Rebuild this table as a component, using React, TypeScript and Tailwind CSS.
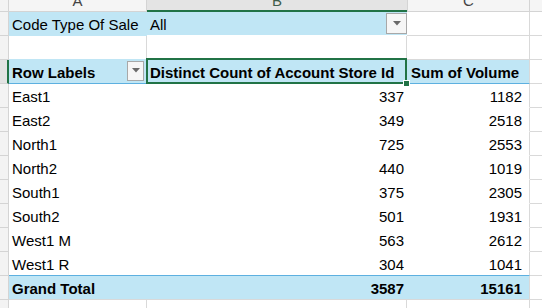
// Pivot table sheet view — Excel-like grid with a page filter, header row and grand total.
const rows: [string, number, number][] = [
  ["East1", 337, 1182],
  ["East2", 349, 2518],
  ["North1", 725, 2553],
  ["North2", 440, 1019],
  ["South1", 375, 2305],
  ["South2", 501, 1931],
  ["West1 M", 563, 2612],
  ["West1 R", 304, 1041],
];

function DropButton({ className }: { className: string }) {
  return (
    <div
      className={`flex shrink-0 items-center justify-center border border-[#a8a8a8] bg-[#f6f6f6] ${className}`}
    >
      <svg width="8" height="5" viewBox="0 0 8 5">
        <polygon points="0,0 8,0 4,4.5" fill="#6a6a6a" />
      </svg>
    </div>
  );
}

function RowHead({ selected = false }: { selected?: boolean }) {
  return selected ? (
    <div className="w-[9px] shrink-0 border-r-2 border-b border-r-[#217346] border-b-[#d4d4d4] bg-[#e3e3e3]" />
  ) : (
    <div className="w-[9px] shrink-0 border-r border-b border-[#d4d4d4] bg-[#f3f3f3]" />
  );
}

const txt = "leading-[17px] whitespace-nowrap";

export default function App() {
  return (
    <div className="h-[308px] w-[542px] overflow-hidden bg-white font-['Liberation_Sans',Arial,sans-serif] text-[15px] text-black">
      {/* column letters */}
      <div className="flex h-[12px]">
        <div className="w-[9px] shrink-0 border-r border-b border-[#d4d4d4] bg-[#f3f3f3]" />
        <div className="flex w-[138px] shrink-0 justify-center overflow-hidden border-r border-b border-[#d4d4d4] bg-[#f5f5f5] leading-[1px] text-[#444]">
          A
        </div>
        <div className="flex w-[260px] shrink-0 justify-center overflow-hidden border-b-2 border-[#217346] bg-[#e4e4e4] leading-[1px] text-[#3e5d4a]">
          B
        </div>
        <div className="flex w-[123px] shrink-0 justify-center overflow-hidden border-r border-b border-l border-[#d4d4d4] bg-[#f5f5f5] leading-[1px] text-[#444]">
          C
        </div>
        <div className="flex-1 border-b border-[#d4d4d4] bg-[#f5f5f5]" />
      </div>

      {/* page filter */}
      <div className="flex h-[24px]">
        <RowHead />
        <div className="flex w-[138px] shrink-0 items-end border-b border-[#c0e6f5] bg-[#c0e6f5] pb-[2px] pl-[3px]">
          <span className={txt}>Code Type Of Sale</span>
        </div>
        <div className="flex w-[260px] shrink-0 items-end border-b border-white bg-[#c0e6f5] pb-[2px] pl-[3px]">
          <span className={`${txt} flex-1`}>All</span>
          <DropButton className="mb-[-1px] h-[21px] w-[21px] self-center" />
        </div>
        <div className="w-[123px] shrink-0 border-r border-b border-[#d9d9d9]" />
        <div className="flex-1 border-b border-[#d9d9d9]" />
      </div>

      {/* blank row */}
      <div className="flex h-[24px]">
        <RowHead />
        <div className="w-[138px] shrink-0 border-r border-b border-r-[#d9d9d9] border-b-[#c0e6f5]" />
        <div className="w-[260px] shrink-0 border-r border-[#d9d9d9]" />
        <div className="w-[123px] shrink-0 border-r border-b border-[#d9d9d9]" />
        <div className="flex-1 border-b border-[#d9d9d9]" />
      </div>

      {/* pivot header */}
      <div className="flex h-[24px]">
        <RowHead selected />
        <div className="flex w-[138px] shrink-0 items-end border-b border-[#5db0e0] bg-[#c0e6f5] pb-[2px] pl-[3px] font-bold">
          <span className={`${txt} flex-1`}>Row Labels</span>
          <DropButton className="mr-[3px] h-[20px] w-[17px] self-center" />
        </div>
        <div className="relative flex w-[260px] shrink-0 items-end border-r border-b border-r-transparent border-b-[#5db0e0] bg-[#c0e6f5] pb-[2px] pl-[3px] font-bold">
          <span className={txt}>Distinct Count of Account Store Id</span>
          <div className="absolute -top-[2px] -right-[1px] bottom-[-1px] -left-[1px] border-2 border-[#217346]" />
          <div className="absolute -right-[4px] -bottom-[4px] h-[7px] w-[7px] border border-white bg-[#217346]" />
        </div>
        <div className="flex w-[123px] shrink-0 items-end border-r border-b border-r-[#d9d9d9] border-b-[#5db0e0] bg-[#c0e6f5] pb-[2px] pl-[4px] font-bold">
          <span className={txt}>Sum of Volume</span>
        </div>
        <div className="flex-1 border-b border-[#d9d9d9]" />
      </div>

      {/* data rows */}
      {rows.map(([label, stores, volume], i) => {
        const edge = i === rows.length - 1 ? "border-b-[#5db0e0]" : "border-b-white";
        return (
          <div key={label} className="flex h-[24px]">
            <RowHead />
            <div className={`flex w-[138px] shrink-0 items-end border-b pb-[2px] pl-[3px] ${edge}`}>
              <span className={txt}>{label}</span>
            </div>
            <div className={`flex w-[260px] shrink-0 items-end justify-end border-b pr-[3px] pb-[2px] ${edge}`}>
              <span className={txt}>{stores}</span>
            </div>
            <div className={`flex w-[123px] shrink-0 items-end justify-end border-r border-b border-r-[#d9d9d9] pr-[7px] pb-[2px] ${edge}`}>
              <span className={txt}>{volume}</span>
            </div>
            <div className="flex-1 border-b border-[#d9d9d9]" />
          </div>
        );
      })}

      {/* grand total */}
      <div className="flex h-[24px] font-bold">
        <RowHead />
        <div className="flex w-[138px] shrink-0 items-end border-b border-[#d9d9d9] bg-[#c0e6f5] pb-[2px] pl-[3px]">
          <span className={txt}>Grand Total</span>
        </div>
        <div className="flex w-[260px] shrink-0 items-end justify-end border-b border-[#d9d9d9] bg-[#c0e6f5] pr-[3px] pb-[2px]">
          <span className={txt}>3587</span>
        </div>
        <div className="flex w-[123px] shrink-0 items-end justify-end border-r border-b border-[#d9d9d9] bg-[#c0e6f5] pr-[7px] pb-[2px]">
          <span className={txt}>15161</span>
        </div>
        <div className="flex-1 border-b border-[#d9d9d9]" />
      </div>

      {/* next empty row */}
      <div className="flex h-[24px]">
        <RowHead />
        <div className="w-[138px] shrink-0 border-r border-b border-[#d9d9d9]" />
        <div className="w-[260px] shrink-0 border-r border-b border-[#d9d9d9]" />
        <div className="w-[123px] shrink-0 border-r border-b border-[#d9d9d9]" />
        <div className="flex-1 border-b border-[#d9d9d9]" />
      </div>
    </div>
  );
}
